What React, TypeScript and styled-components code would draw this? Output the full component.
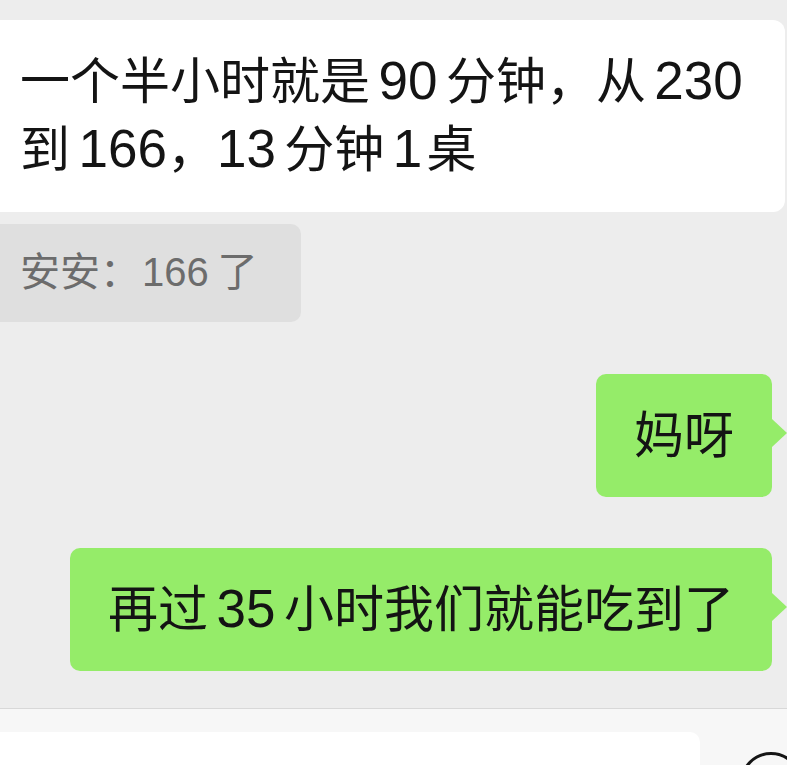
import React from "react";
import styled, { createGlobalStyle } from "styled-components";

const GlobalStyle = createGlobalStyle`
  html, body {
    margin: 0;
    padding: 0;
    background: #ededed;
    overflow: hidden;
  }
  body {
    font-family: "Noto Sans CJK SC", "Noto Sans", sans-serif;
  }
`;

const Screen = styled.div`
  width: 787px;
  height: 765px;
  overflow: hidden;
  display: flex;
  flex-direction: column;
  background: #ededed;
`;

const Messages = styled.div`
  flex: 1;
  display: flex;
  flex-direction: column;
  padding-top: 20px;
  overflow: hidden;
`;

const Row = styled.div<{ $right?: boolean; $gap: number }>`
  display: flex;
  justify-content: ${(p) => (p.$right ? "flex-end" : "flex-start")};
  margin-top: ${(p) => p.$gap}px;
  padding-right: ${(p) => (p.$right ? 15 : 0)}px;
`;

const TextBubble = styled.div`
  flex: 1;
  margin: 0 2px 0 -20px;
  padding: 23px 0 33px 40px;
  background: #ffffff;
  border-radius: 12px;
  font-size: 50px;
  line-height: 68px;
  color: #141414;
  white-space: nowrap;
`;

const SystemBubble = styled.div`
  margin-left: -20px;
  padding: 17px 43px 25px 40px;
  background: #dfdfdf;
  border-radius: 10px;
  font-size: 40px;
  line-height: 56px;
  color: #6c6c6c;
  white-space: nowrap;
`;

const GreenBubble = styled.div`
  position: relative;
  padding: 23px 38px 32px 38px;
  background: #95ec69;
  border-radius: 10px;
  font-size: 50px;
  line-height: 68px;
  color: #141414;
  white-space: nowrap;

  &::after {
    content: "";
    position: absolute;
    right: -15px;
    top: 45px;
    width: 0;
    height: 0;
    border-top: 14px solid transparent;
    border-bottom: 14px solid transparent;
    border-left: 15px solid #95ec69;
  }
`;

const Num = styled.span<{ $ml?: number; $mr?: number; $fs?: number }>`
  font-family: "Liberation Sans", "Noto Sans", sans-serif;
  font-size: ${(p) => p.$fs ?? 1.06}em;
  line-height: 1;
  margin-left: ${(p) => p.$ml ?? 0.16}em;
  margin-right: ${(p) => p.$mr ?? 0.16}em;
`;

const InputBar = styled.div`
  height: 57px;
  flex: none;
  border-top: 1px solid #d8d8d8;
  background: #f7f7f7;
  display: flex;
  align-items: flex-start;
  gap: 40px;
  padding-top: 23px;
  box-sizing: border-box;
  overflow: hidden;
`;

const InputBox = styled.div`
  width: 720px;
  margin-left: -20px;
  height: 80px;
  background: #ffffff;
  border-radius: 10px;
  flex: none;
`;

const IconButton = styled.div`
  flex: none;
  width: 62px;
  height: 62px;
  margin-top: 20px;
  display: flex;
`;

export default function App() {
  return (
    <>
      <GlobalStyle />
      <Screen>
        <Messages>
          <Row $gap={0}>
            <TextBubble>
              一个半小时就是<Num>90</Num>分钟，从<Num>230</Num>
              <br />
              到<Num $mr={0}>166</Num>，<Num $ml={0}>13</Num>分钟<Num $mr={0.08}>1</Num>桌
            </TextBubble>
          </Row>
          <Row $gap={12}>
            <SystemBubble>
              安安：<Num $fs={1} $ml={0.05} $mr={0.22}>166</Num>了
            </SystemBubble>
          </Row>
          <Row $right $gap={52}>
            <GreenBubble>妈呀</GreenBubble>
          </Row>
          <Row $right $gap={51}>
            <GreenBubble>
              再过<Num>35</Num>小时我们就能吃到了
            </GreenBubble>
          </Row>
        </Messages>
        <InputBar>
          <InputBox />
          <IconButton>
            <svg width="62" height="62" viewBox="0 0 62 62">
              <circle cx="31" cy="31" r="29.5" fill="none" stroke="#151515" strokeWidth="3" />
            </svg>
          </IconButton>
        </InputBar>
      </Screen>
    </>
  );
}
